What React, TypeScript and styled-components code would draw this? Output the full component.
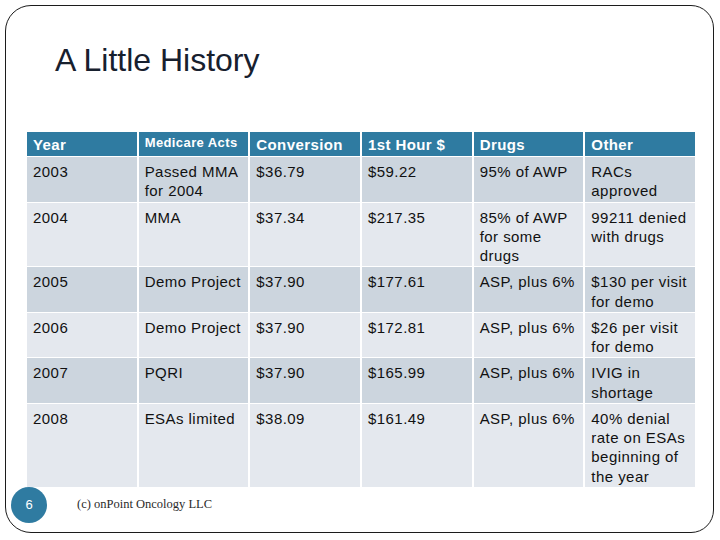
import * as React from 'react';
import styled, { createGlobalStyle } from 'styled-components';

const GlobalStyle = createGlobalStyle`
    html, body {
        margin: 0;
        padding: 0;
        background: #ffffff;
    }
    body {
        font-family: "Liberation Sans", Arial, sans-serif;
    }
`;

const Page = styled.div`
    width: 720px;
    height: 540px;
    padding: 5px 6px 7px 5px;
    box-sizing: border-box;
    background: #ffffff;
`;

const Frame = styled.div`
    height: 100%;
    box-sizing: border-box;
    border: 1.5px solid #1c1c1c;
    border-radius: 26px 23px 23px 26px;
    display: flex;
    flex-direction: column;
`;

const Title = styled.h1`
    margin: 0;
    padding: 36px 0 0 49px;
    font-size: 32px;
    line-height: 36px;
    font-weight: normal;
    color: #17202e;
`;

const Table = styled.div`
    margin: 54px 0 0 21px;
    width: 668px;
    display: grid;
    grid-template-columns: repeat(6, 1fr);
    column-gap: 2px;
    row-gap: 1px;
    background: #ffffff;
`;

const HeadCell = styled.div<{ $small?: boolean }>`
    background: #2f7ba1;
    color: #ffffff;
    font-weight: bold;
    font-size: ${p => (p.$small ? '13px' : '15px')};
    line-height: ${p => (p.$small ? '16px' : '19px')};
    letter-spacing: 0.4px;
    height: 24px;
    box-sizing: border-box;
    padding: 3px 2px 2px 6px;
`;

const Cell = styled.div<{ $odd: boolean }>`
    background: ${p => (p.$odd ? '#ccd5de' : '#e4e8ee')};
    color: #111111;
    font-size: 15px;
    line-height: 19.25px;
    letter-spacing: 0.45px;
    padding: 5px 2px 1px 6px;
    white-space: pre-line;
`;

const Footer = styled.div`
    display: flex;
    align-items: center;
    margin: 0 0 0 5px;
`;

const SlideNumber = styled.div`
    width: 36px;
    height: 36px;
    border-radius: 50%;
    background: #2f7ba1;
    color: #ffffff;
    font-size: 13px;
    display: flex;
    align-items: center;
    justify-content: center;
`;

const Credit = styled.div`
    margin-left: 30px;
    font-family: "Liberation Serif", "Times New Roman", serif;
    font-size: 12.5px;
    color: #2a2a2a;
`;

const headers = ['Year', 'Medicare Acts', 'Conversion', '1st Hour $', 'Drugs', 'Other'];

const rows = [
    ['2003', 'Passed MMA\nfor 2004', '$36.79', '$59.22', '95% of AWP', 'RACs\napproved'],
    ['2004', 'MMA', '$37.34', '$217.35', '85% of AWP\nfor some\ndrugs', '99211 denied\nwith drugs'],
    ['2005', 'Demo Project', '$37.90', '$177.61', 'ASP, plus 6%', '$130 per visit\nfor demo'],
    ['2006', 'Demo Project', '$37.90', '$172.81', 'ASP, plus 6%', '$26 per visit\nfor demo'],
    ['2007', 'PQRI', '$37.90', '$165.99', 'ASP, plus 6%', 'IVIG in\nshortage'],
    ['2008', 'ESAs limited', '$38.09', '$161.49', 'ASP, plus 6%', '40% denial\nrate on ESAs\nbeginning of\nthe year'],
];

export default function App() {
    return (
        <Page>
            <GlobalStyle />
            <Frame>
                <Title>A Little History</Title>
                <Table>
                    {headers.map(h => (
                        <HeadCell key={h} $small={h === 'Medicare Acts'}>{h}</HeadCell>
                    ))}
                    {rows.map((r, i) =>
                        r.map((c, j) => (
                            <Cell key={`${i}-${j}`} $odd={i % 2 === 0}>{c}</Cell>
                        ))
                    )}
                </Table>
                <Footer>
                    <SlideNumber>6</SlideNumber>
                    <Credit>(c) onPoint Oncology LLC</Credit>
                </Footer>
            </Frame>
        </Page>
    );
}
